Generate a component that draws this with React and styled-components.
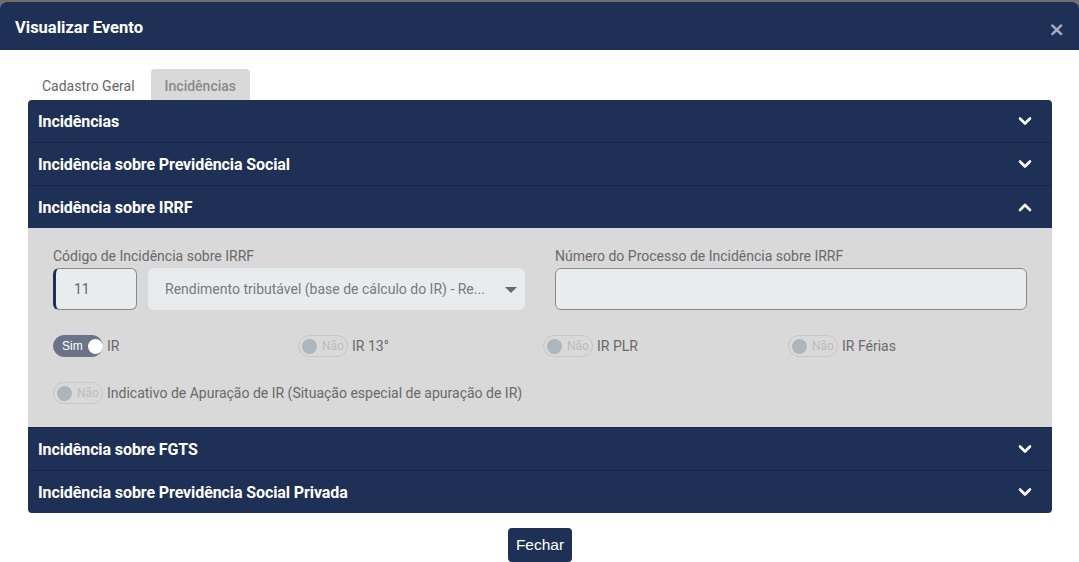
import React from "react";
import styled, { createGlobalStyle } from "styled-components";

const Global = createGlobalStyle`
  html, body { margin: 0; padding: 0; background: #fff; }
  body { font-family: Roboto, "Noto Sans", sans-serif; }
  * { box-sizing: border-box; }
`;

const NAVY = "#1f3056";

const Backdrop = styled.div`
  width: 1079px;
  height: 562px;
  background: #6e6e6e;
  padding-top: 2px;
  overflow: hidden;
`;

const Modal = styled.div`
  background: #fff;
  border-radius: 6px 6px 0 0;
  height: 560px;
  display: flex;
  flex-direction: column;
`;

const Header = styled.div`
  height: 48px;
  flex: none;
  background: ${NAVY};
  border-radius: 6px 6px 0 0;
  display: flex;
  align-items: center;
  justify-content: space-between;
  padding: 2px 14px 0 15px;
`;

const Title = styled.h1`
  margin: 0;
  color: #fff;
  font-size: 16.5px;
  font-weight: 700;
`;

const Close = styled.span`
  color: #a5acbd;
  font-size: 20px;
  font-weight: 700;
  font-family: "DejaVu Sans", sans-serif;
  margin-top: 4px;
  line-height: 1;
`;

const Body = styled.div`
  padding: 19px 27px 0 28px;
  display: flex;
  flex-direction: column;
`;

const Tabs = styled.div`
  display: flex;
  height: 31px;
`;

const Tab = styled.div`
  padding: 0 14px;
  font-size: 14px;
  line-height: 34px;
  color: ${(p) => (p.$active ? "#8a8a8a" : "#666")};
  background: ${(p) => (p.$active ? "#d9d9d9" : "transparent")};
  border-radius: 4px 4px 0 0;
  font-weight: ${(p) => (p.$active ? 500 : 400)};
  margin-left: ${(p) => (p.$active ? "2px" : "0")};
`;

const Accordion = styled.div`
  border-radius: 4px;
  overflow: hidden;
  background: ${NAVY};
`;

const Item = styled.div`
  & + & {
    border-top: 1px solid #17254a;
  }
`;

const ItemHeader = styled.div`
  height: 42px;
  display: flex;
  align-items: center;
  justify-content: space-between;
  padding: 0 20px 0 10px;
  color: #fff;
  font-size: 16px;
  font-weight: 700;
  letter-spacing: -0.1px;
`;

const Panel = styled.div`
  background: #d9d9d9;
  height: 199px;
  padding: 18px 25px 0 25px;
`;

const Grid = styled.div`
  display: grid;
  grid-template-columns: 1fr 1fr;
  column-gap: 30px;
`;

const Field = styled.div`
  display: flex;
  flex-direction: column;
`;

const Label = styled.label`
  font-size: 14px;
  color: #6a6a6a;
  line-height: 20px;
  margin-bottom: 2px;
`;

const Row = styled.div`
  display: flex;
  gap: 11px;
`;

const CodeInput = styled.div`
  width: 84px;
  height: 42px;
  background: #e9ecef;
  border: 1px solid #8a8a8a;
  border-left: 3px solid ${NAVY};
  border-radius: 6px;
  display: flex;
  align-items: center;
  padding-left: 18px;
  font-size: 14px;
  color: #666;
`;

const Select = styled.div`
  flex: 1;
  height: 42px;
  background: #e9ecef;
  border-radius: 6px;
  display: flex;
  align-items: center;
  justify-content: space-between;
  padding: 0 8px 0 17px;
  font-size: 14px;
  color: #7a7a7a;
`;

const Caret = styled.span`
  width: 0;
  height: 0;
  border-left: 6px solid transparent;
  border-right: 6px solid transparent;
  border-top: 6px solid #6a6a6a;
  margin-top: 2px;
`;

const TextInput = styled.div`
  height: 42px;
  background: #e9ecef;
  border: 1px solid #8a8a8a;
  border-radius: 6px;
`;

const Toggles = styled.div`
  display: grid;
  grid-template-columns: repeat(4, 245px);
  margin-top: 25px;
  row-gap: 25px;
`;

const ToggleItem = styled.div`
  display: flex;
  align-items: center;
  gap: 4px;
  font-size: 14px;
  color: #6a6a6a;
  grid-column: ${(p) => (p.$wide ? "1 / -1" : "auto")};
`;

const Switch = styled.span`
  width: 50px;
  height: 22px;
  border-radius: 11px;
  display: flex;
  align-items: center;
  flex-direction: ${(p) => (p.$on ? "row" : "row-reverse")};
  justify-content: ${(p) => (p.$on ? "flex-start" : "flex-end")};
  gap: 5px;
  padding: 0 2px 0 8px;
  font-size: 12px;
  font-family: "Liberation Sans", Arial, sans-serif;
  background: ${(p) => (p.$on ? "#6b7388" : "transparent")};
  border: 1px solid ${(p) => (p.$on ? "#6b7388" : "#c8c8c8")};
  color: ${(p) => (p.$on ? "#fff" : "#bdbdbd")};
  ${(p) => (!p.$on ? "padding: 0 6px 0 3px; font-family: Roboto, sans-serif;" : "")}
`;

const Knob = styled.span`
  width: 15px;
  height: 15px;
  border-radius: 50%;
  background: ${(p) => (p.$on ? "#fff" : "#adb5bd")};
  flex: none;
`;

const Footer = styled.div`
  display: flex;
  justify-content: center;
  padding-top: 15px;
`;

const Button = styled.button`
  background: ${NAVY};
  color: #fff;
  border: none;
  border-radius: 4px;
  height: 34px;
  padding: 0 8px;
  font-size: 15.5px;
  font-family: "Liberation Sans", Arial, sans-serif;
`;

const Chevron = ({ up }) => (
  <svg width="14" height="10" viewBox="0 0 14 10">
    <path
      d={up ? "M2 8 L7 3 L12 8" : "M2 2.5 L7 7.5 L12 2.5"}
      fill="none"
      stroke="#fff"
      strokeWidth="2.6"
      strokeLinecap="round"
      strokeLinejoin="round"
    />
  </svg>
);

const Toggle = ({ on, label, wide }) => (
  <ToggleItem $wide={wide}>
    <Switch $on={on}>
      <span>{on ? "Sim" : "Não"}</span>
      <Knob $on={on} />
    </Switch>
    {label}
  </ToggleItem>
);

export default function App() {
  const sections = [
    "Incidências",
    "Incidência sobre Previdência Social",
    "Incidência sobre IRRF",
    "Incidência sobre FGTS",
    "Incidência sobre Previdência Social Privada",
  ];
  return (
    <>
      <Global />
      <Backdrop>
        <Modal>
          <Header>
            <Title>Visualizar Evento</Title>
            <Close>×</Close>
          </Header>
          <Body>
            <Tabs>
              <Tab>Cadastro Geral</Tab>
              <Tab $active>Incidências</Tab>
            </Tabs>
            <Accordion>
              {sections.map((s, i) => (
                <Item key={s}>
                  <ItemHeader>
                    {s}
                    <Chevron up={i === 2} />
                  </ItemHeader>
                  {i === 2 && (
                    <Panel>
                      <Grid>
                        <Field>
                          <Label>Código de Incidência sobre IRRF</Label>
                          <Row>
                            <CodeInput>11</CodeInput>
                            <Select>
                              Rendimento tributável (base de cálculo do IR) - Re...
                              <Caret />
                            </Select>
                          </Row>
                        </Field>
                        <Field>
                          <Label>Número do Processo de Incidência sobre IRRF</Label>
                          <TextInput />
                        </Field>
                      </Grid>
                      <Toggles>
                        <Toggle on label="IR" />
                        <Toggle label="IR 13°" />
                        <Toggle label="IR PLR" />
                        <Toggle label="IR Férias" />
                        <Toggle wide label="Indicativo de Apuração de IR (Situação especial de apuração de IR)" />
                      </Toggles>
                    </Panel>
                  )}
                </Item>
              ))}
            </Accordion>
            <Footer>
              <Button>Fechar</Button>
            </Footer>
          </Body>
        </Modal>
      </Backdrop>
    </>
  );
}
